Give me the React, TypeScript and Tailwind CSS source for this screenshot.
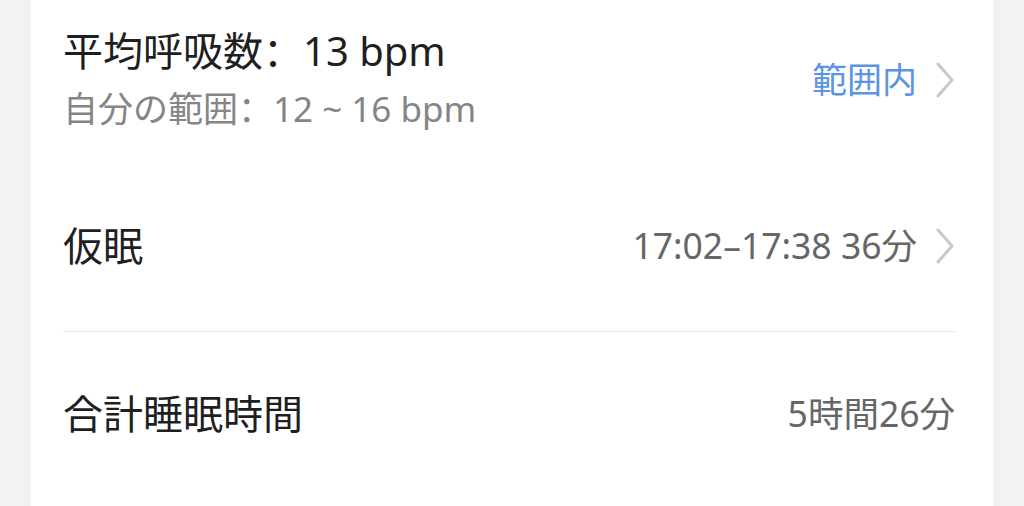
import React from "react";

const font = { fontFamily: '"Noto Sans", "Noto Sans CJK JP", sans-serif' };
const sc = { fontFamily: '"Noto Sans CJK SC", sans-serif' };

function Chevron() {
  return (
    <svg width="20" height="36" viewBox="0 0 20 36" className="ml-[18px] shrink-0">
      <path d="M3 2 L17 18 L3 34" fill="none" stroke="#c9c9c9" strokeWidth="3" strokeLinecap="round" strokeLinejoin="round" />
    </svg>
  );
}

export default function App() {
  return (
    <div className="w-[1024px] h-[506px] bg-[#f1f2f4] flex justify-center overflow-hidden" style={font}>
      <div className="w-[962px] h-full bg-white pl-[32px] pr-[38px] flex flex-col">
        <div className="flex items-center pt-[22px] pb-[23px]">
          <div className="flex-1 flex flex-col">
            <div className="text-[40px] leading-[58px] h-[58px] text-[#1f1f1f]">
              平均呼吸数<span className="leading-[0px]" style={sc}>：</span>13 bpm
            </div>
            <div className="text-[35px] leading-[58px] h-[58px] text-[#858585]">
              自分の範囲<span className="leading-[0px]" style={sc}>：</span>12 ~ 16 bpm
            </div>
          </div>
          <div className="flex items-center">
            <span className="text-[35px] text-[#5b94e2]">範囲内</span>
            <Chevron />
          </div>
        </div>
        <div className="h-[170px] flex items-center">
          <div className="flex-1 text-[40px] text-[#1f1f1f]">仮眠</div>
          <div className="flex items-center">
            <span className="text-[35.5px] text-[#666666]">17:02–17:38 36分</span>
            <Chevron />
          </div>
        </div>
        <div className="h-px bg-[#e3e3e3]" />
        <div className="h-[164px] flex items-center">
          <div className="flex-1 text-[40px] text-[#1f1f1f]">合計睡眠時間</div>
          <span className="text-[35.5px] text-[#666666]">5時間26分</span>
        </div>
      </div>
    </div>
  );
}
